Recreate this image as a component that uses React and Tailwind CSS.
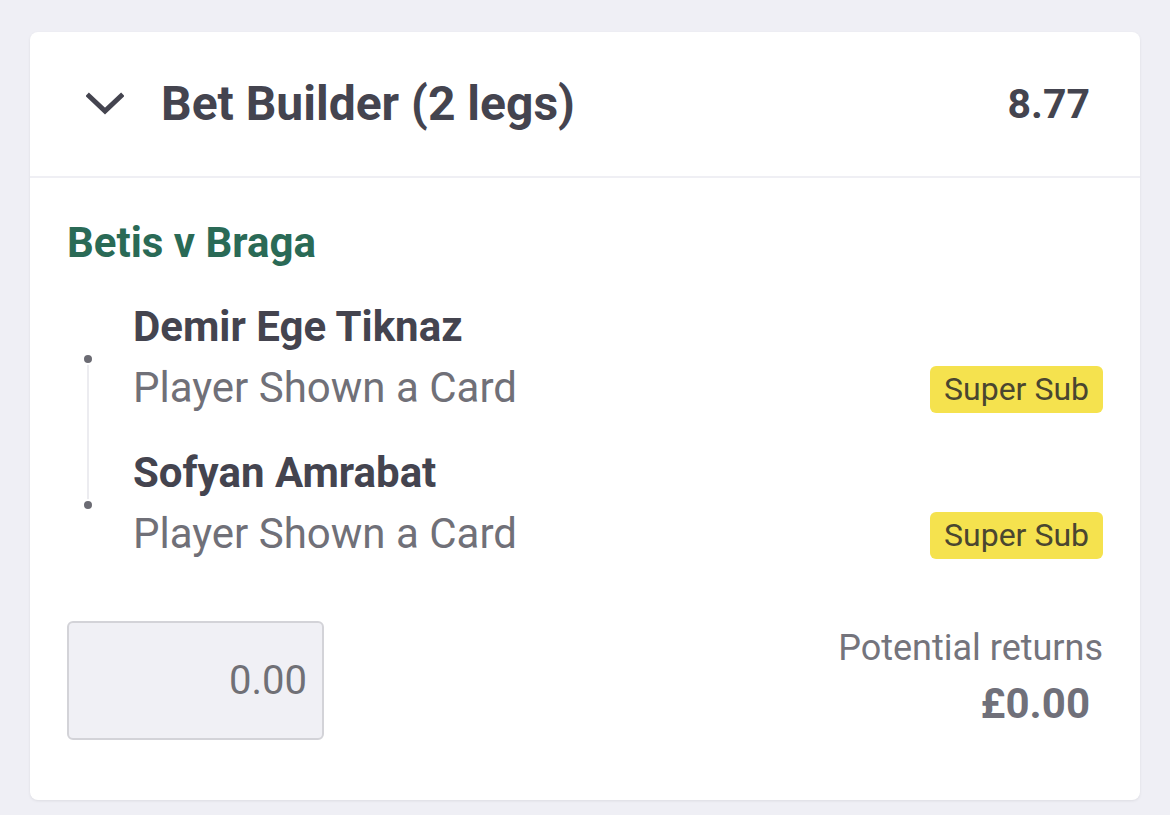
import React from 'react';

const legs = [
  { id: 1, player: 'Demir Ege Tiknaz', market: 'Player Shown a Card' },
  { id: 2, player: 'Sofyan Amrabat', market: 'Player Shown a Card' },
];

function Chevron() {
  return (
    <svg className="h-[26px] w-[38px]" viewBox="0 0 38 26" fill="none">
      <path d="M3 5l16 15L35 5" stroke="#44444f" strokeWidth="5" strokeLinecap="square" strokeLinejoin="miter" />
    </svg>
  );
}

export default function App() {
  return (
    <div className="min-h-[815px] w-full bg-[#efeff5] px-[30px] pt-[32px]" style={{ fontFamily: 'Roboto, "Noto Sans", sans-serif' }}>
      <div className="w-[1110px] h-[768px] rounded-[8px] bg-white shadow-[0_1px_3px_rgba(0,0,0,0.08)]">
        {/* header */}
        <div className="flex h-[146px] items-center border-b-2 border-[#efeff4] pl-[56px] pr-[50px]">
          <Chevron />
          <div className="ml-[37px] flex-1 text-[48px] font-bold leading-none text-[#44444f]">
            Bet Builder (2 legs)
          </div>
          <div className="text-[41px] font-bold leading-none text-[#44444f]">8.77</div>
        </div>

        {/* body */}
        <div className="px-[37px] pt-[44px]">
          <div className="text-[42px] font-bold leading-[42px] text-[#2a6a56]">Betis v Braga</div>

          <div className="relative mt-[39px]">
            <div className="absolute left-[20px] top-[55px] h-[145px] w-[2px] bg-[#ececf0]" />
            {legs.map((leg, i) => (
              <div key={leg.id} className={`relative pl-[66px] ${i === 0 ? 'mb-[36px]' : ''}`}>
                <div className="absolute left-[15px] top-[50px] h-[12px] w-[12px] rounded-full border-2 border-white bg-[#6b6b73]" />
                <div className="text-[42px] font-bold leading-[48px] text-[#44444f]">{leg.player}</div>
                <div className="mt-[11px] flex items-center justify-between">
                  <div className="text-[42px] leading-[48px] text-[#707078]">{leg.market}</div>
                  <span className="mt-[4px] rounded-[6px] bg-[#f5e24e] px-[14px] py-[6px] text-[32px] leading-[35px] text-[#4a4630]">
                    Super Sub
                  </span>
                </div>
              </div>
            ))}
          </div>

          <div className="mt-[62px] flex items-start justify-between">
            <div className="flex h-[119px] w-[257px] items-center justify-end rounded-[6px] border-2 border-[#d3d3d8] bg-[#f0f0f5] pr-[15px] text-[40px] text-[#707076]">
              0.00
            </div>
            <div className="flex flex-col items-end pt-[7px]">
              <div className="text-[36px] leading-[40px] text-[#74747c]">Potential returns</div>
              <div className="mr-[13px] mt-[14px] text-[42px] font-bold leading-[44px] text-[#70707a]">£0.00</div>
            </div>
          </div>
        </div>
      </div>
    </div>
  );
}
